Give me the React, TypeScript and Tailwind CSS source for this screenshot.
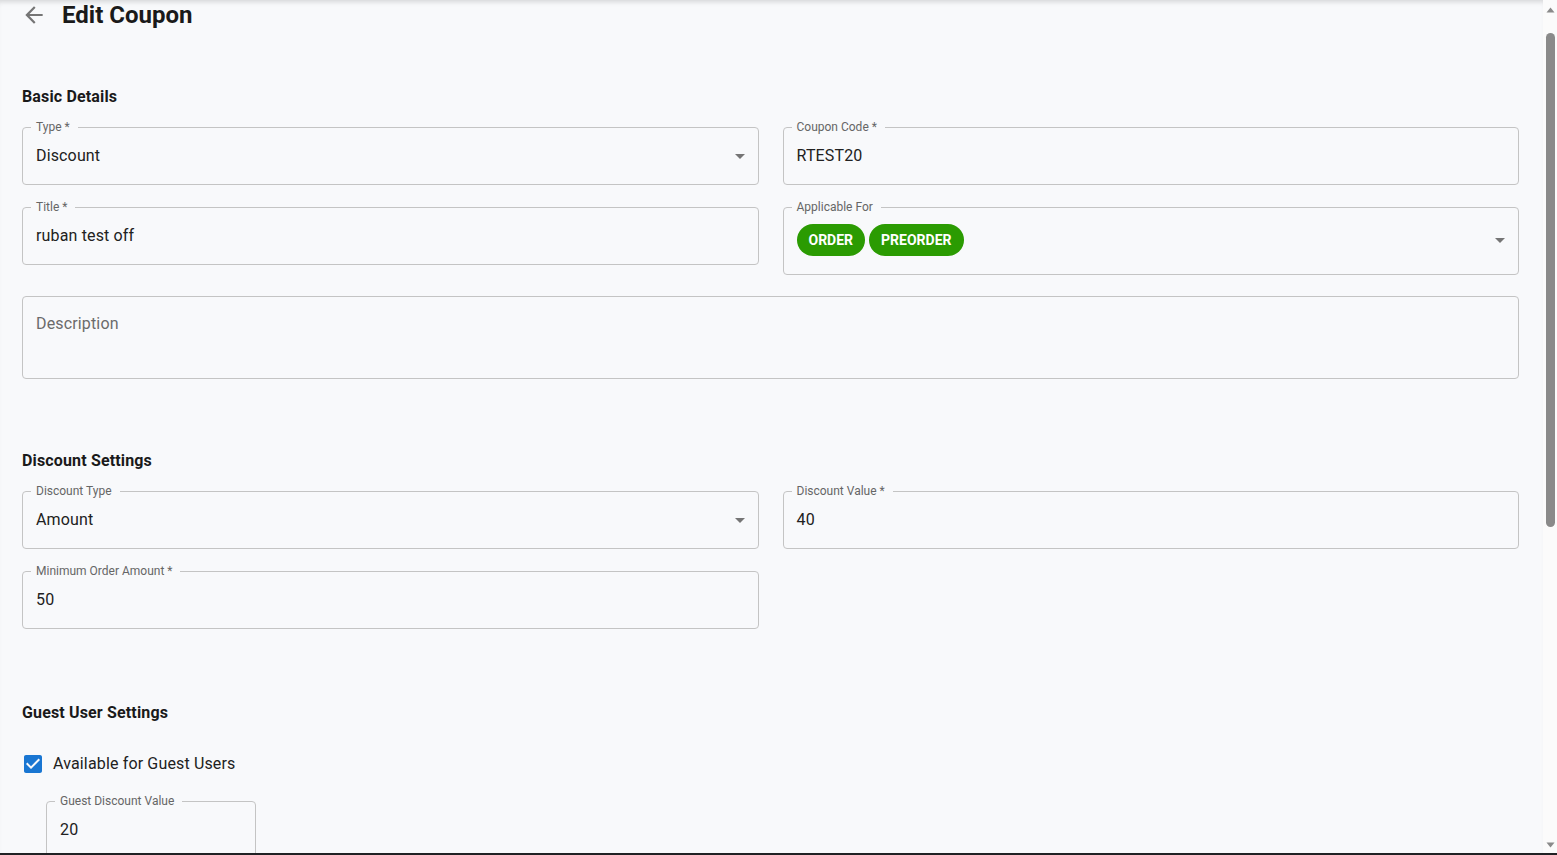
import type { ReactNode } from "react";

const borderColor = "border-[#c4c4c4]";

function DropIcon() {
  return (
    <svg viewBox="0 0 24 24" className="h-6 w-6 shrink-0 fill-[#757575]">
      <path d="M7 10l5 5 5-5z" />
    </svg>
  );
}

interface OutlinedProps {
  label: string;
  children: ReactNode;
  select?: boolean;
  tall?: boolean;
  className?: string;
}

// outlined field with the label sitting in the notch of the border
function Outlined({ label, children, select, tall, className = "" }: OutlinedProps) {
  return (
    <fieldset className={`m-0 min-w-0 rounded-[4px] border ${borderColor} p-0 ${className}`}>
      <legend className="ml-[8px] pl-[5px] pr-[8px] text-xs leading-4 text-[#666666]">{label}</legend>
      {tall ? (
        <div className="flex h-[59px] items-start justify-between pl-[13px] pr-[6px] pt-[9px]">
          {children}
          {select && (
            <div className="flex h-8 items-center">
              <DropIcon />
            </div>
          )}
        </div>
      ) : (
        <div className="flex h-[49px] items-center justify-between pb-[8px] pl-[13px] pr-[6px]">
          <span className="text-base leading-6 tracking-[0.15px] text-[#212121]">{children}</span>
          {select && <DropIcon />}
        </div>
      )}
    </fieldset>
  );
}

function Chip({ text }: { text: string }) {
  return (
    <span className="flex h-8 items-center rounded-full bg-[#2b9b02] px-3 text-sm font-bold text-white">
      {text}
    </span>
  );
}

function Heading({ children, className = "" }: { children: ReactNode; className?: string }) {
  return (
    <h2 className={`text-base font-bold leading-6 tracking-[0.15px] text-[#1a1a1a] ${className}`}>{children}</h2>
  );
}

function Scrollbar() {
  return (
    <div className="flex w-[14px] shrink-0 flex-col bg-[#fbfbfb] pl-[3px] pr-[2px]">
      <svg viewBox="0 0 9 6" className="mt-[7px] h-[6px] w-[9px] fill-[#8a8a8a]">
        <path d="M4.5 0.5L8.5 5.5H0.5z" />
      </svg>
      <div className="mt-[20px] h-[494px] w-[9px] rounded-full bg-[#8a8a8a]" />
      <div className="flex-1" />
      <svg viewBox="0 0 9 6" className="mb-[5px] h-[6px] w-[9px] fill-[#8a8a8a]">
        <path d="M0.5 0.5H8.5L4.5 5.5z" />
      </svg>
    </div>
  );
}

export default function App() {
  return (
    <div className="flex h-[855px] flex-col overflow-hidden bg-[#f8f9fb] font-['Roboto',sans-serif]">
      <div className="flex min-h-0 flex-1">
        <main className="min-w-0 flex-1 overflow-hidden pl-[22px] pr-[24px] shadow-[inset_0_5px_5px_-3px_rgba(0,0,0,0.14)]">
          {/* page header */}
          <div className="flex h-[30px] items-center">
            <svg viewBox="0 0 24 24" className="ml-[-1px] h-[26px] w-[26px] fill-[#757575]">
              <path d="M20 11H7.83l5.59-5.59L12 4l-8 8 8 8 1.41-1.41L7.83 13H20v-2z" />
            </svg>
            <h1 className="ml-[15px] text-2xl font-bold leading-8 text-[#1a1a1a]">Edit Coupon</h1>
          </div>

          {/* basic details */}
          <Heading className="mt-[55px]">Basic Details</Heading>
          <div className="mt-[10px] grid grid-cols-2 items-start gap-x-6 gap-y-[14px]">
            <Outlined label="Type *" select>
              Discount
            </Outlined>
            <Outlined label="Coupon Code *">RTEST20</Outlined>
            <Outlined label="Title *">ruban test off</Outlined>
            <Outlined label="Applicable For" select tall>
              <div className="flex gap-1">
                <Chip text="ORDER" />
                <Chip text="PREORDER" />
              </div>
            </Outlined>
          </div>
          <div className={`mt-[21px] h-[83px] rounded-[4px] border ${borderColor} px-[13px] pt-[15px]`}>
            <span className="text-base leading-6 tracking-[0.15px] text-[#6b6b6b]">Description</span>
          </div>

          {/* discount settings */}
          <Heading className="mt-[70px]">Discount Settings</Heading>
          <div className="mt-[10px] grid grid-cols-2 items-start gap-x-6 gap-y-[14px]">
            <Outlined label="Discount Type" select>
              Amount
            </Outlined>
            <Outlined label="Discount Value *">40</Outlined>
            <Outlined label="Minimum Order Amount *">50</Outlined>
          </div>

          {/* guest user settings */}
          <Heading className="mt-[72px]">Guest User Settings</Heading>
          <label className="mt-[18px] flex h-[42px] items-center">
            <svg viewBox="0 0 24 24" className="ml-[-1px] h-6 w-6 fill-[#1976d2]">
              <path d="M19 3H5c-1.11 0-2 .9-2 2v14c0 1.1.89 2 2 2h14c1.11 0 2-.9 2-2V5c0-1.1-.89-2-2-2zm-9 14l-5-5 1.41-1.41L10 14.17l7.59-7.59L19 8l-9 9z" />
            </svg>
            <span className="ml-[8px] text-base leading-6 tracking-[0.15px] text-[#212121]">
              Available for Guest Users
            </span>
          </label>
          <Outlined label="Guest Discount Value" className="ml-[24px] mt-[8px] w-[210px]">
            20
          </Outlined>
        </main>
        <Scrollbar />
      </div>
      <div className="h-[2px] shrink-0 bg-[#202124]" />
    </div>
  );
}
